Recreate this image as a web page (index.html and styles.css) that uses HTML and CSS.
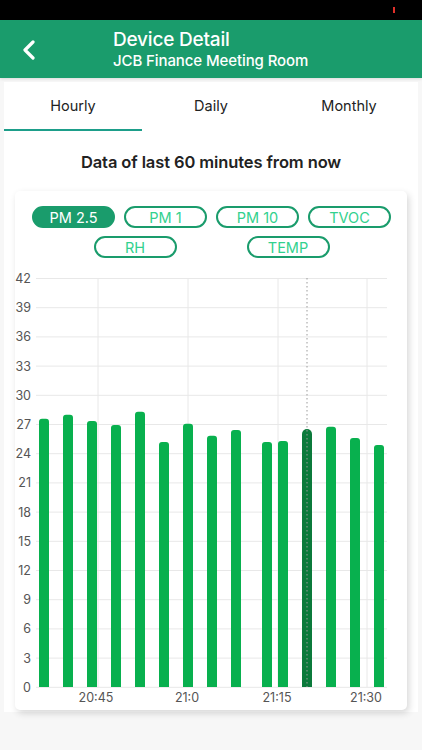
FILE: index.html
```html
<!DOCTYPE html>
<html>
<head>
<meta charset="utf-8">
<link rel="stylesheet" href="styles.css">
</head>
<body>
<div class="status"><span class="status-mark"></span></div>
<header class="header">
  <svg class="back" width="14" height="20" viewBox="0 0 14 20"><path d="M11 2 L3 10 L11 18" fill="none" stroke="#fff" stroke-width="3.2" stroke-linecap="round" stroke-linejoin="round"/></svg>
  <div class="titles">
    <div class="title">Device Detail</div>
    <div class="subtitle">JCB Finance Meeting Room</div>
  </div>
</header>
<main class="main">
  <nav class="tabs">
    <div class="tab active">Hourly</div>
    <div class="tab">Daily</div>
    <div class="tab">Monthly</div>
  </nav>
  <h2 class="heading">Data of last 60 minutes from now</h2>
  <section class="card">
    <div class="chips">
      <span class="chip selected">PM 2.5</span>
      <span class="chip">PM 1</span>
      <span class="chip">PM 10</span>
      <span class="chip">TVOC</span>
    </div>
    <div class="chips chips-2">
      <span class="chip">RH</span>
      <span class="chip">TEMP</span>
    </div>
    <svg class="chart" width="392" height="442" viewBox="0 0 392 442">
      <g stroke="#e8e8e8" stroke-width="1">
        <line x1="21" x2="372" y1="15.5" y2="15.5"/>
        <line x1="21" x2="372" y1="44.7" y2="44.7"/>
        <line x1="21" x2="372" y1="73.9" y2="73.9"/>
        <line x1="21" x2="372" y1="103.1" y2="103.1"/>
        <line x1="21" x2="372" y1="132.3" y2="132.3"/>
        <line x1="21" x2="372" y1="161.5" y2="161.5"/>
        <line x1="21" x2="372" y1="190.7" y2="190.7"/>
        <line x1="21" x2="372" y1="219.9" y2="219.9"/>
        <line x1="21" x2="372" y1="249.1" y2="249.1"/>
        <line x1="21" x2="372" y1="278.3" y2="278.3"/>
        <line x1="21" x2="372" y1="307.5" y2="307.5"/>
        <line x1="21" x2="372" y1="336.7" y2="336.7"/>
        <line x1="21" x2="372" y1="365.9" y2="365.9"/>
        <line x1="21" x2="372" y1="395.1" y2="395.1"/>
        <line x1="21" x2="372" y1="424.3" y2="424.3"/>
        <line x1="83" x2="83" y1="15" y2="424"/>
        <line x1="173" x2="173" y1="15" y2="424"/>
        <line x1="263" x2="263" y1="15" y2="424"/>
        <line x1="352" x2="352" y1="15" y2="424"/>
      </g>
      <g class="ylab" text-anchor="end">
        <text x="16" y="20">42</text>
        <text x="16" y="49.2">39</text>
        <text x="16" y="78.4">36</text>
        <text x="16" y="107.6">33</text>
        <text x="16" y="136.8">30</text>
        <text x="16" y="166">27</text>
        <text x="16" y="195.2">24</text>
        <text x="16" y="224.4">21</text>
        <text x="16" y="253.6">18</text>
        <text x="16" y="282.8">15</text>
        <text x="16" y="312">12</text>
        <text x="16" y="341.2">9</text>
        <text x="16" y="370.4">6</text>
        <text x="16" y="399.6">3</text>
        <text x="16" y="428.8">0</text>
      </g>
      <g class="xlab" text-anchor="middle">
        <text x="81" y="438.5">20:45</text>
        <text x="172" y="438.5">21:0</text>
        <text x="262" y="438.5">21:15</text>
        <text x="351" y="438.5">21:30</text>
      </g>
      <g fill="#08b04e">
        <path d="M24 424 V158.7 a3 3 0 0 1 3 -3 h4 a3 3 0 0 1 3 3 V424 Z"/>
        <path d="M48 424 V154.7 a3 3 0 0 1 3 -3 h4 a3 3 0 0 1 3 3 V424 Z"/>
        <path d="M72 424 V161 a3 3 0 0 1 3 -3 h4 a3 3 0 0 1 3 3 V424 Z"/>
        <path d="M96 424 V165 a3 3 0 0 1 3 -3 h4 a3 3 0 0 1 3 3 V424 Z"/>
        <path d="M120 424 V151.7 a3 3 0 0 1 3 -3 h4 a3 3 0 0 1 3 3 V424 Z"/>
        <path d="M144 424 V182 a3 3 0 0 1 3 -3 h4 a3 3 0 0 1 3 3 V424 Z"/>
        <path d="M168 424 V163.7 a3 3 0 0 1 3 -3 h4 a3 3 0 0 1 3 3 V424 Z"/>
        <path d="M192 424 V175.7 a3 3 0 0 1 3 -3 h4 a3 3 0 0 1 3 3 V424 Z"/>
        <path d="M216 424 V170 a3 3 0 0 1 3 -3 h4 a3 3 0 0 1 3 3 V424 Z"/>
        <path d="M247 424 V182 a3 3 0 0 1 3 -3 h4 a3 3 0 0 1 3 3 V424 Z"/>
        <path d="M263 424 V181 a3 3 0 0 1 3 -3 h4 a3 3 0 0 1 3 3 V424 Z"/>
        <path d="M311 424 V166.7 a3 3 0 0 1 3 -3 h4 a3 3 0 0 1 3 3 V424 Z"/>
        <path d="M335 424 V178 a3 3 0 0 1 3 -3 h4 a3 3 0 0 1 3 3 V424 Z"/>
        <path d="M359 424 V185 a3 3 0 0 1 3 -3 h4 a3 3 0 0 1 3 3 V424 Z"/>
      </g>
      <path fill="#0b7a3b" d="M287 424 V171 a5 5 0 0 1 10 0 V424 Z"/>
      <line x1="292" x2="292" y1="15" y2="424" stroke="#9a9a9a" stroke-width="1" stroke-dasharray="1.5 2.5"/>
    </svg>
  </section>
</main>
</body>
</html>
```
FILE: styles.css
```css
* { box-sizing: border-box; }
html, body { margin: 0; padding: 0; }
body {
  width: 422px;
  height: 750px;
  background: #f7f7f7;
  font-family: Inter, "Noto Sans", "Liberation Sans", sans-serif;
  color: #222;
  overflow: hidden;
}
.status {
  height: 20px;
  background: #000;
  position: relative;
}
.status-mark {
  position: absolute;
  left: 393px;
  top: 7px;
  width: 1.5px;
  height: 6px;
  background: #e0302a;
}
.header {
  height: 58px;
  background: #1a9c6c;
  display: flex;
  align-items: center;
  color: #fff;
  box-shadow: 0 1px 3px rgba(0,0,0,0.12);
}
.back {
  margin-left: 22px;
  margin-top: 2px;
}
.titles {
  margin-left: 77px;
  display: flex;
  flex-direction: column;
  margin-top: 1px;
}
.title {
  font-size: 19px;
  font-weight: 500;
  line-height: 22px;
  letter-spacing: -0.2px;
}
.subtitle {
  font-size: 15px;
  font-weight: 500;
  line-height: 19px;
  letter-spacing: -0.1px;
}
.main {
  background: #fff;
  margin: 4px 4px 0;
  height: 630px;
  padding-top: 1px;
}
.tabs {
  display: flex;
  height: 48px;
}
.tab {
  flex: 1;
  text-align: center;
  font-size: 14.5px;
  line-height: 42px;
  color: #222;
  padding-top: 2px;
}
.tab.active {
  border-bottom: 2.5px solid #1d9e8a;
}
.heading {
  margin: 19px 0 0;
  text-align: center;
  font-size: 16.5px;
  font-weight: 600;
  line-height: 24px;
  color: #222;
  letter-spacing: -0.1px;
}
.card {
  margin: 17px 11px 0;
  height: 519px;
  background: #fff;
  border-radius: 5px;
  box-shadow: 2px 3px 7px rgba(0,0,0,0.16);
  padding-top: 15px;
}
.chips {
  display: flex;
  justify-content: center;
  gap: 9px;
  padding-left: 1px;
}
.chips-2 {
  gap: 70px;
  margin-top: 8px;
}
.chip {
  width: 83px;
  height: 22px;
  border: 2.5px solid #1a9c6c;
  border-radius: 11px;
  display: flex;
  align-items: center;
  justify-content: center;
  font-size: 14.5px;
  color: #32d18e;
}
.chip.selected {
  background: #1a9c6c;
  color: #fff;
}
.chart {
  display: block;
  margin-top: 5px;
}
.ylab text, .xlab text {
  font-family: Inter, "Noto Sans", "Liberation Sans", sans-serif;
  font-size: 12.5px;
  fill: #555;
}
```
